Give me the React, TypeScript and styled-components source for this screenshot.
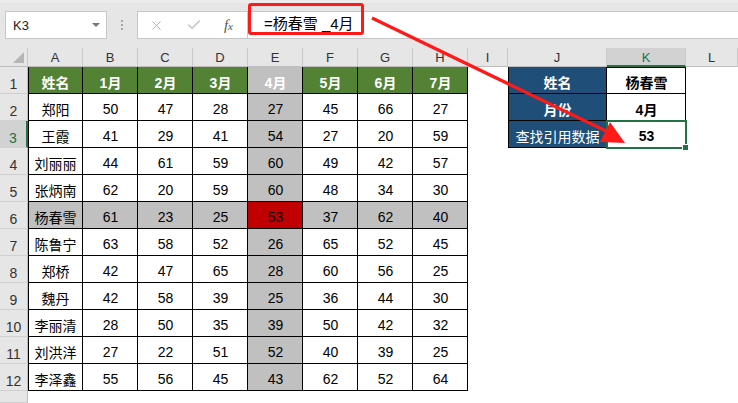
import React from 'react'
import styled, { createGlobalStyle } from 'styled-components'
import { X, Check } from 'lucide-react'

const GlobalStyle = createGlobalStyle`
  html, body {
    margin: 0;
    padding: 0;
    background: #fff;
  }
  body {
    font-family: "Liberation Sans", "Noto Sans CJK SC", sans-serif;
  }
`

const GREEN = '#548235'
const GREY = '#c0c0c0'
const RED = '#c00000'
const BLUE = '#1f4e78'
const SEL = '#217346'

const letters = ['A', 'B', 'C', 'D', 'E', 'F', 'G', 'H', 'I', 'J', 'K', 'L']

const header = ['姓名', '1月', '2月', '3月', '4月', '5月', '6月', '7月']

const people: [string, number[]][] = [
  ['郑阳', [50, 47, 28, 27, 45, 66, 27]],
  ['王霞', [41, 29, 41, 54, 27, 20, 59]],
  ['刘丽丽', [44, 61, 59, 60, 49, 42, 57]],
  ['张炳南', [62, 20, 59, 60, 48, 34, 30]],
  ['杨春雪', [61, 23, 25, 53, 37, 62, 40]],
  ['陈鲁宁', [63, 58, 52, 26, 65, 52, 45]],
  ['郑桥', [42, 47, 65, 28, 60, 56, 25]],
  ['魏丹', [42, 58, 39, 25, 36, 44, 30]],
  ['李丽清', [28, 50, 35, 39, 50, 42, 32]],
  ['刘洪洋', [27, 22, 51, 52, 40, 39, 25]],
  ['李泽鑫', [55, 56, 45, 43, 62, 52, 64]],
]

const lookup = [
  { label: '姓名', value: '杨春雪' },
  { label: '月份', value: '4月' },
  { label: '查找引用数据', value: '53' },
]

// inset shadows stand in for the excel cell borders
const edges = (left: boolean, top: boolean) => {
  const parts = ['inset -1px -1px 0 #000']
  if (left) parts.push('inset 1px 0 0 #000')
  if (top) parts.push('inset 0 1px 0 #000')
  return parts.join(', ')
}

export default function App() {
  const rows: React.ReactNode[] = []

  for (let r = 1; r <= 12; r++) {
    const cells: React.ReactNode[] = []
    cells.push(
      <RowHead key="h" $active={r === 3}>
        {r}
      </RowHead>
    )

    for (let c = 0; c < 8; c++) {
      let text: string | number
      let bg = '#fff'
      let fg = '#000'
      let bold = false
      if (r === 1) {
        text = header[c]
        bg = c === 4 ? GREY : GREEN
        fg = '#fff'
        bold = true
      } else {
        const [name, vals] = people[r - 2]
        text = c === 0 ? name : vals[c - 1]
        if (c === 4) bg = GREY
        if (r === 6) bg = c === 4 ? RED : GREY
      }
      cells.push(
        <Cell key={c} $bg={bg} $fg={fg} $bold={bold} $edge={edges(c === 0, false)}>
          {text}
        </Cell>
      )
    }

    cells.push(<Cell key="i" />)

    if (r <= 3) {
      const item = lookup[r - 1]
      cells.push(
        <Cell key="j" $bg={BLUE} $fg="#fff" $bold={r < 3} $edge={edges(true, false)}>
          {item.label}
        </Cell>
      )
      cells.push(
        <Cell key="k" $bold $edge={edges(false, r === 1)}>
          {item.value}
          {r === 3 && (
            <Selection>
              <Handle />
            </Selection>
          )}
        </Cell>
      )
    } else {
      cells.push(<Cell key="j" />)
      cells.push(<Cell key="k" />)
    }
    cells.push(<Cell key="l" />)

    rows.push(<React.Fragment key={r}>{cells}</React.Fragment>)
  }

  return (
    <Page>
      <GlobalStyle />
      <TopBar>
        <NameBox>
          <span>K3</span>
          <Caret />
        </NameBox>
        <Grip>
          <i />
          <i />
          <i />
        </Grip>
        <FxBox>
          <X size={15} strokeWidth={1.6} color="#b3b3b3" />
          <Check size={16} strokeWidth={2.2} color="#c4c4c4" />
          <FxLabel>
            f<small>x</small>
          </FxLabel>
        </FxBox>
        <FormulaInput>=杨春雪 _4月</FormulaInput>
      </TopBar>

      <Sheet>
        <Corner />
        {letters.map((l) => (
          <ColHead key={l} $active={l === 'K'}>
            {l}
          </ColHead>
        ))}
        {rows}
        <RowHead />
      </Sheet>

      <RedBox />
      <Arrow width="738" height="403" viewBox="0 0 738 403">
        <line x1="372" y1="18" x2="606" y2="131" stroke="#ff1a1a" strokeWidth="3.2" />
        <polygon points="625,143 600,142 610,122" fill="#ff1a1a" />
      </Arrow>
    </Page>
  )
}

const Page = styled.div`
  position: relative;
  width: 738px;
  height: 403px;
  overflow: hidden;
  background: #fff;
`

const TopBar = styled.div`
  height: 48px;
  box-sizing: border-box;
  padding: 8px 0 0 5px;
  background: #e6e6e6;
  border-top: 3px solid #ececec;
  display: flex;
  align-items: flex-start;
`

const NameBox = styled.div`
  width: 102px;
  height: 28px;
  box-sizing: border-box;
  background: #fff;
  border: 1px solid #c6c6c6;
  display: flex;
  align-items: center;
  justify-content: space-between;
  padding: 0 6px 0 7px;
  font-size: 13px;
  color: #222;
`

const Caret = styled.span`
  width: 0;
  height: 0;
  border-left: 4px solid transparent;
  border-right: 4px solid transparent;
  border-top: 4px solid #777;
`

const Grip = styled.div`
  width: 30px;
  height: 28px;
  display: flex;
  flex-direction: column;
  align-items: center;
  justify-content: center;
  gap: 2px;
  i {
    width: 2px;
    height: 2px;
    background: #a9a9a9;
  }
`

const FxBox = styled.div`
  width: 110px;
  height: 28px;
  box-sizing: border-box;
  background: #fff;
  border: 1px solid #c6c6c6;
  border-right: none;
  display: flex;
  align-items: center;
  justify-content: space-between;
  padding: 0 14px 0 11px;
`

const FxLabel = styled.span`
  font-family: "Liberation Serif", serif;
  font-style: italic;
  font-size: 15px;
  color: #555;
  small {
    font-size: 11px;
  }
`

const FormulaInput = styled.div`
  flex: 1;
  height: 28px;
  box-sizing: border-box;
  background: #fff;
  border: 1px solid #c6c6c6;
  border-right: none;
  padding: 2px 0 0 16px;
  font-size: 15px;
  line-height: 20px;
  color: #000;
  white-space: pre;
`

const Sheet = styled.div`
  display: grid;
  grid-template-columns: 28px repeat(8, 55px) 40px 99px 79px 1fr;
  grid-template-rows: 19px repeat(12, 27px) 1fr;
  height: 355px;
`

const Corner = styled.div`
  background: #e6e6e6;
  border-right: 1px solid #c9c9c9;
  border-bottom: 1px solid #bdbdbd;
  position: relative;
  &::after {
    content: '';
    position: absolute;
    right: 3px;
    bottom: 3px;
    border-left: 11px solid transparent;
    border-bottom: 11px solid #b5b5b5;
  }
`

const ColHead = styled.div<{ $active?: boolean }>`
  background: ${(p) => (p.$active ? '#d2d2d2' : '#e6e6e6')};
  border-right: 1px solid #c9c9c9;
  border-bottom: ${(p) => (p.$active ? `2px solid ${SEL}` : '1px solid #bdbdbd')};
  color: ${(p) => (p.$active ? SEL : '#333')};
  font-size: 13px;
  display: flex;
  align-items: center;
  justify-content: center;
  padding-top: 1px;
`

const RowHead = styled.div<{ $active?: boolean }>`
  background: ${(p) => (p.$active ? '#d2d2d2' : '#e6e6e6')};
  border-right: ${(p) => (p.$active ? `2px solid ${SEL}` : '1px solid #bdbdbd')};
  border-bottom: 1px solid #d0d0d0;
  color: ${(p) => (p.$active ? SEL : '#333')};
  font-size: 14px;
  display: flex;
  align-items: flex-end;
  justify-content: center;
  padding-bottom: 1px;
  box-sizing: border-box;
`

const Cell = styled.div<{ $bg?: string; $fg?: string; $bold?: boolean; $edge?: string }>`
  position: relative;
  display: flex;
  align-items: center;
  justify-content: center;
  padding-top: 2px;
  box-sizing: border-box;
  background: ${(p) => p.$bg || '#fff'};
  color: ${(p) => p.$fg || '#000'};
  font-weight: ${(p) => (p.$bold ? 700 : 400)};
  box-shadow: ${(p) => p.$edge || 'none'};
  font-size: 14px;
  white-space: nowrap;
`

const Selection = styled.div`
  position: absolute;
  z-index: 2;
  left: -1px;
  top: -1px;
  right: -1px;
  bottom: -1px;
  border: 2px solid ${SEL};
`

const Handle = styled.span`
  position: absolute;
  right: -4px;
  bottom: -4px;
  width: 5px;
  height: 5px;
  background: ${SEL};
  border: 1px solid #fff;
`

const RedBox = styled.div`
  position: absolute;
  left: 248px;
  top: 3px;
  width: 116px;
  height: 32px;
  box-sizing: border-box;
  border: 3px solid #ff1a1a;
  border-radius: 3px;
`

const Arrow = styled.svg`
  position: absolute;
  z-index: 3;
  left: 0;
  top: 0;
  pointer-events: none;
`
